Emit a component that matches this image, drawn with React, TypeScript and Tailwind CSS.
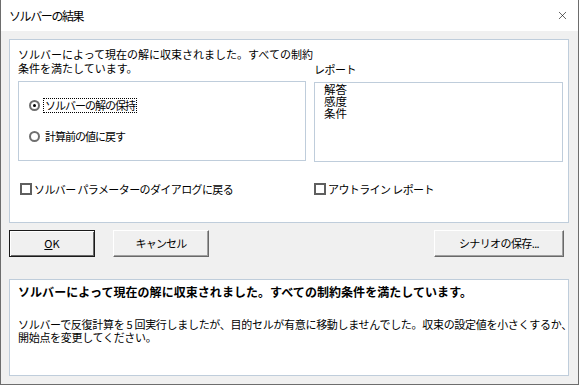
import { X } from 'lucide-react';

function Radio({ checked, label, focused }: { checked?: boolean; label: string; focused?: boolean }) {
  return (
    <div className="flex h-[15px] items-center">
      <span className="flex h-[11px] w-[11px] items-center justify-center rounded-full border-2 border-[#6f6f6f] bg-white">
        {checked ? <span className="h-[3px] w-[3px] rounded-full bg-black" /> : null}
      </span>
      <span
        className={
          focused
            ? 'ml-[3px] border border-dotted border-black px-[1px] leading-[13px] tracking-[-1px]'
            : 'ml-[4px] px-[1px] leading-[13px] tracking-[-1px]'
        }
      >
        {label}
      </span>
    </div>
  );
}

function Check({ label, className }: { label: string; className?: string }) {
  return (
    <div className={`flex items-center ${className ?? ''}`}>
      <span className="h-[12px] w-[12px] border-2 border-[#5f5f5f] bg-white" />
      <span className="ml-[2px] tracking-[-0.6px]">{label}</span>
    </div>
  );
}

export default function App() {
  return (
    <div className="flex h-[385px] w-[579px] flex-col border border-t-0 border-[#6d6d6d] bg-[#f0f0f0] font-['Noto_Sans_CJK_JP','Noto_Sans_CJK_SC',sans-serif] text-black">
      {/* title bar */}
      <div className="flex h-[31px] items-center justify-between bg-white pl-[8px] pr-[9px]">
        <span className="text-[12px] tracking-[-1.4px]">ソルバーの結果</span>
        <X size={13} strokeWidth={1.1} className="text-black" />
      </div>

      <div className="flex flex-col px-[8px] pt-[8px]">
        {/* main panel */}
        <div className="flex h-[184px] w-[560px] flex-col border border-[#bfcddb] bg-white pl-[8px] pt-[7px] text-[11px] leading-[14px]">
          <p>ソルバーによって現在の解に収束されました。すべての制約</p>
          <div className="flex">
            <span className="w-[296px]">条件を満たしています。</span>
            <span className="mt-[1px] tracking-[-0.5px]">レポート</span>
          </div>

          <div className="mt-[5px] flex items-start gap-[8px]">
            <div className="flex h-[80px] w-[288px] flex-col border border-[#bfcddb] pl-[10px] pt-[16px]">
              <Radio checked focused label="ソルバーの解の保持" />
              <div className="mt-[16px]">
                <Radio label="計算前の値に戻す" />
              </div>
            </div>
            <div className="mt-[1px] flex h-[80px] w-[249px] flex-col border border-[#bfcddb] pl-[9px] text-[11.5px] leading-[12px]">
              <span>解答</span>
              <span>感度</span>
              <span>条件</span>
            </div>
          </div>

          <div className="mt-[20px] flex pl-[2px]">
            <Check className="w-[294px]" label="ソルバー パラメーターのダイアログに戻る" />
            <Check label="アウトライン レポート" />
          </div>
        </div>

        {/* buttons */}
        <div className="mt-[7px] flex h-[27px] text-[11px]">
          <button className="h-[27px] w-[86px] border border-[#1a1a1a] bg-[#f0f0f0] shadow-[inset_1px_1px_0_#ffffff,inset_-1px_-1px_0_#696969]">
            <span className="underline">O</span>K
          </button>
          <button className="ml-[18px] h-[27px] w-[96px] border border-b-[#696969] border-l-white border-r-[#696969] border-t-white bg-[#f0f0f0] tracking-[-0.8px] shadow-[inset_-1px_-1px_0_#a0a0a0]">
            キャンセル
          </button>
          <button className="ml-auto mr-[6px] h-[27px] w-[130px] border border-b-[#696969] border-l-white border-r-[#696969] border-t-white bg-[#f0f0f0] tracking-[-0.6px] shadow-[inset_-1px_-1px_0_#a0a0a0]">
            シナリオの保存...
          </button>
        </div>

        {/* message panel */}
        <div className="mt-[22px] flex h-[97px] w-[560px] flex-col border border-[#bfcddb] bg-white pl-[8px] pt-[5px]">
          <p className="text-[12px] font-bold leading-[14px] tracking-[0.05px]">
            ソルバーによって現在の解に収束されました。すべての制約条件を満たしています。
          </p>
          <p className="mt-[19px] whitespace-nowrap text-[11px] leading-[13px] tracking-[-0.3px]">
            ソルバーで反復計算を 5 回実行しましたが、目的セルが有意に移動しませんでした。収束の設定値を小さくするか、
            <br />
            開始点を変更してください。
          </p>
        </div>
      </div>
    </div>
  );
}
